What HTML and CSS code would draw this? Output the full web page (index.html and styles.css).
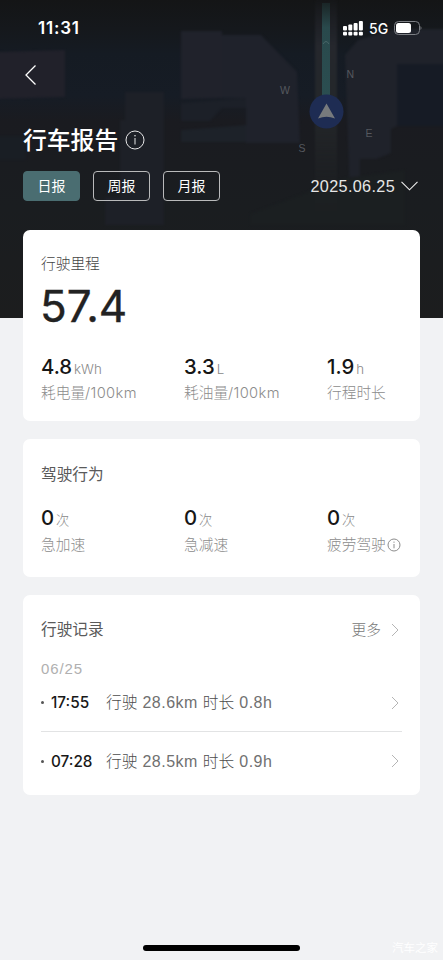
FILE: index.html
```html
<!DOCTYPE html>
<html lang="zh-CN">
<head>
<meta charset="utf-8">
<title>行车报告</title>
<link rel="stylesheet" href="styles.css">
</head>
<body>
<div class="screen">
  <svg class="map" viewBox="0 0 443 318" width="443" height="318" aria-hidden="true">
    <defs>
      <linearGradient id="base" x1="0" y1="0" x2="0" y2="1">
        <stop offset="0" stop-color="#141516"/><stop offset=".09" stop-color="#15181c"/>
        <stop offset=".17" stop-color="#151b23"/><stop offset=".3" stop-color="#161c25"/><stop offset=".38" stop-color="#1a1b20"/>
        <stop offset=".65" stop-color="#1a1d20"/><stop offset="1" stop-color="#1c1d1e"/>
      </linearGradient>
      <linearGradient id="route" x1="0" y1="0" x2="0" y2="1">
        <stop offset="0" stop-color="#1a2526"/><stop offset=".25" stop-color="#29494c"/><stop offset="1" stop-color="#2b4e51"/>
      </linearGradient>
      <linearGradient id="road" x1="0" y1="0" x2="0" y2="1">
        <stop offset="0" stop-color="#25272d" stop-opacity=".1"/><stop offset=".2" stop-color="#25272d"/>
        <stop offset=".5" stop-color="#24272a"/><stop offset="1" stop-color="#202224" stop-opacity="0"/>
      </linearGradient>
      <filter id="soft" color-interpolation-filters="sRGB"><feGaussianBlur stdDeviation="1"/></filter>
    </defs>
    <rect width="443" height="318" fill="url(#base)"/>
    <g filter="url(#soft)">
      <path d="M-4 52L65 50V97L-4 99Z" fill="#21212a"/>
      <path d="M-4 136H26V160H-4Z" fill="#191e24"/>
      <path d="M125 92H164V225H105V197H120V120H125Z" fill="#1d2027"/>
      <path d="M181 31H222V98L181 99Z" fill="#20222b"/>
      <path d="M181 103L246 98V108H222L210 121H181Z" fill="#1c2028"/>
      <path d="M181 130L246 125V142H181Z" fill="#1d2229"/>
      <path d="M222 35H261L297 72L300 143H246V98H222Z" fill="#1f222b"/>
      <path d="M345 55L358 40L396 29H450V64H397V126L391 129V153L376 159H360V200H350Z" fill="#1f222a"/>
      <path d="M397 64H450V126H397Z" fill="#161b25"/>
      <path d="M250 214L345 178L405 170V225H250Z" fill="#1b1f21"/>
      <rect x="315" y="0" width="22" height="225" fill="url(#road)"/>
    </g>
    <rect x="322" y="3" width="8" height="98" fill="url(#route)"/>
    <path d="M323 44Q326 39 329 44" fill="none" stroke="#496669"/>
    <circle cx="326.500" cy="111.500" r="17" fill="#1e2c53"/>
    <path d="M326.500 103.500L335 118.500Q326.500 115 318 118.500Z" fill="#777a7d"/>
    <g class="compass">
      <text x="280" y="94">W</text><text x="346.500" y="78">N</text>
      <text x="365.500" y="136.500">E</text><text x="298.500" y="151.500">S</text>
    </g>
  </svg>

  <header class="status">
    <time class="clock">11:31</time>
    <div class="signals">
      <svg width="20" height="15" viewBox="0 0 20 15" fill="#fff">
        <rect x="0" y="5" width="4" height="4.500" rx="1"/><rect x="5.300" y="3.500" width="4" height="6" rx="1"/>
        <rect x="10.600" y="2" width="4" height="7.500" rx="1"/><rect x="15.900" y="0" width="4" height="9.500" rx="1"/>
        <rect x="0" y="10.700" width="4" height="3.800" rx="1"/><rect x="5.300" y="10.700" width="4" height="3.800" rx="1"/>
        <rect x="10.600" y="10.700" width="4" height="3.800" rx="1"/><rect x="15.900" y="10.700" width="4" height="3.800" rx="1"/>
      </svg>
      <span class="network">5G</span>
      <svg width="28" height="14" viewBox="0 0 28 14">
        <rect x=".5" y=".5" width="25" height="13" rx="4" fill="none" stroke="#7c7f84"/>
        <rect x="2" y="2" width="15" height="10" rx="2.500" fill="#fff"/>
        <path d="M26.500 5Q28.500 7 26.500 9Z" fill="#7c7f84"/>
      </svg>
    </div>
  </header>

  <nav class="nav">
    <svg width="12" height="20" viewBox="0 0 12 20" fill="none" stroke="#fff" stroke-width="1.300"><path d="M10.500 .5L1 10L10.500 19.500"/></svg>
  </nav>

  <div class="heading">
    <h1>行车报告</h1>
    <svg width="20" height="20" viewBox="0 0 20 20" fill="none" stroke="#e8e8e9"><circle cx="10" cy="10" r="9"/><path d="M10 8V14.500"/><circle cx="10" cy="5.700" r=".8" fill="#e8e8e9" stroke="none"/></svg>
  </div>

  <div class="filters">
    <button class="tab active">日报</button>
    <button class="tab">周报</button>
    <button class="tab">月报</button>
    <div class="date"><span>2025.06.25</span>
      <svg width="17" height="10" viewBox="0 0 17 10" fill="none" stroke="#eee" stroke-width="1.100"><path d="M.5 .8L8.500 8.800L16.500 .8"/></svg>
    </div>
  </div>

  <main class="cards">
    <section class="card mileage">
      <h2 class="light">行驶里程</h2>
      <div class="total">57.4</div>
      <div class="stats">
        <div><p class="value">4.8<small>kWh</small></p><p class="label">耗电量<span class="latin">/100km</span></p></div>
        <div><p class="value">3.3<small>L</small></p><p class="label">耗油量<span class="latin">/100km</span></p></div>
        <div><p class="value">1.9<small>h</small></p><p class="label">行程时长</p></div>
      </div>
    </section>

    <section class="card behavior">
      <h2>驾驶行为</h2>
      <div class="stats">
        <div><p class="value">0<small>次</small></p><p class="label">急加速</p></div>
        <div><p class="value">0<small>次</small></p><p class="label">急减速</p></div>
        <div><p class="value">0<small>次</small></p><p class="label">疲劳驾驶<svg width="14" height="14" viewBox="0 0 14 14" fill="none" stroke="#8c8c8c"><circle cx="7" cy="7" r="6"/><path d="M7 6V10.300M7 3.600V4.800"/></svg></p></div>
      </div>
    </section>

    <section class="card records">
      <div class="title-row">
        <h2>行驶记录</h2>
        <div class="more">更多<svg class="chevron" width="8" height="14" viewBox="0 0 8 14"><path d="M1 1L7 7L1 13"/></svg></div>
      </div>
      <div class="day">06/25</div>
      <div class="record first">
        <i class="dot"></i><time>17:55</time><span class="trip">行驶 <b>28.6km</b> 时长 <b>0.8h</b></span>
        <svg class="chevron" width="8" height="14" viewBox="0 0 8 14"><path d="M1 1L7 7L1 13"/></svg>
      </div>
      <div class="record">
        <i class="dot"></i><time>07:28</time><span class="trip">行驶 <b>28.5km</b> 时长 <b>0.9h</b></span>
        <svg class="chevron" width="8" height="14" viewBox="0 0 8 14"><path d="M1 1L7 7L1 13"/></svg>
      </div>
    </section>
  </main>

  <footer class="bottom"><div class="home"></div><span class="credit">汽车之家</span></footer>
</div>
</body>
</html>
```

FILE: styles.css
```css
* { box-sizing: border-box; }
body { margin: 0; }
h1, h2, p { margin: 0; font-weight: 400; }

.screen {
  position: relative;
  display: flex;
  flex-direction: column;
  width: 443px;
  height: 960px;
  overflow: hidden;
  background: #f1f2f4;
  font-family: Inter, "Noto Sans CJK SC", sans-serif;
}
.map { position: absolute; top: 0; left: 0; }
.compass { font: 10.500px "Liberation Sans", sans-serif; fill: #55585e; }
.status, .nav, .heading, .filters, .cards { position: relative; }

.status {
  display: flex;
  justify-content: space-between;
  align-items: center;
  height: 56px;
  padding: 0 21px 0 38px;
  color: #fff;
}
.clock { font-size: 17px; font-weight: 600; letter-spacing: .8px; }
.signals { display: flex; align-items: center; }
.network { width: 19px; margin: 1px 6px 0 6px; font-size: 14px; font-weight: 500; }

.nav { height: 38px; padding: 9px 0 0 25px; }
.nav svg { display: block; }

.heading { display: flex; align-items: center; gap: 7px; height: 52px; margin-top: 20px; padding-left: 23px; }
h1 { padding-top: 2px; font-size: 23.800px; line-height: 50px; font-weight: 500; color: #fff; }

.filters { display: flex; gap: 13px; height: 30px; margin-top: 5px; padding: 0 25px 0 23px; }
.tab {
  width: 57px;
  height: 30px;
  padding: 0 0 2px;
  border: 1px solid #b9babb;
  border-radius: 4px;
  background: transparent;
  color: #fff;
  font: 14px/26px "Noto Sans CJK SC", sans-serif;
}
.tab.active { background: #4a6d71; border-color: #4a6d71; }
.date { display: flex; align-items: center; gap: 6px; margin-left: auto; color: #e6e6e6; font: 16.200px "Liberation Sans", sans-serif; letter-spacing: .35px; }

.cards { display: flex; flex-direction: column; gap: 18px; margin-top: 29px; padding: 0 23px; }
.card { padding: 23.500px 18px 0; border-radius: 7px; background: #fff; }
.mileage { height: 191px; padding-top: 22px; }
.behavior { height: 138px; padding-top: 24px; }
.records { height: 200px; padding-top: 23px; }

h2 { font-size: 15.700px; line-height: 24px; color: #5a5a5a; }
h2.light { font-size: 14.700px; font-weight: 300; color: #444; }
.total { height: 44px; margin: 8px 0 0 -1px; font-size: 44px; line-height: 44px; font-weight: 400; color: #222; -webkit-text-stroke: .4px #222; }
.stats { display: grid; grid-template-columns: 143px 143px 1fr; }
.mileage .stats { margin-top: 27px; }
.behavior .stats { margin-top: 19px; }
.value { height: 24px; font-size: 20.300px; line-height: 24px; font-weight: 500; color: #161616; white-space: nowrap; }
.value small { margin-left: 2px; font-size: 13.300px; line-height: 1; font-weight: 300; color: #888; }
.label { display: flex; align-items: center; height: 22px; margin-top: 3px; font-size: 14.700px; line-height: 22px; font-weight: 300; color: #8c8c8c; white-space: nowrap; }
.behavior .label { margin-top: 4px; }
.latin { letter-spacing: .35px; }
.label svg { margin-left: 1px; }

.title-row { display: flex; justify-content: space-between; }
.more { display: flex; align-items: center; gap: 10px; padding-right: 3px; font-size: 14.700px; line-height: 24px; font-weight: 300; color: #777; }
.chevron { display: block; fill: none; stroke: #b5b5b5; stroke-width: 1; }
.day { margin-top: 17px; font: 15px/20px "Liberation Sans", sans-serif; letter-spacing: .9px; color: #b0b0b0; }
.record { display: flex; align-items: center; height: 58px; font-size: 15.700px; }
.record.first { height: 53px; padding-bottom: 5px; border-bottom: 1px solid #e2e3e4; }
.dot { width: 3px; height: 3px; border-radius: 50%; background: #555; }
.record time { width: 55px; margin-left: 7px; font-weight: 500; color: #181818; font-size: 15.300px; }
.trip { margin-top: -2px; font-weight: 300; color: #4c4c4c; white-space: nowrap; word-spacing: .6px; }
.trip b { font: 16px "Liberation Sans", sans-serif; letter-spacing: .5px; color: #707070; }
.record .chevron { margin-left: auto; margin-right: 3px; }

.bottom .home { position: absolute; left: 143px; bottom: 9px; width: 157px; height: 6px; border-radius: 3px; background: #000; }
.credit { position: absolute; right: 5px; bottom: 5px; font-size: 11.500px; line-height: 14px; color: #fff; }
```
